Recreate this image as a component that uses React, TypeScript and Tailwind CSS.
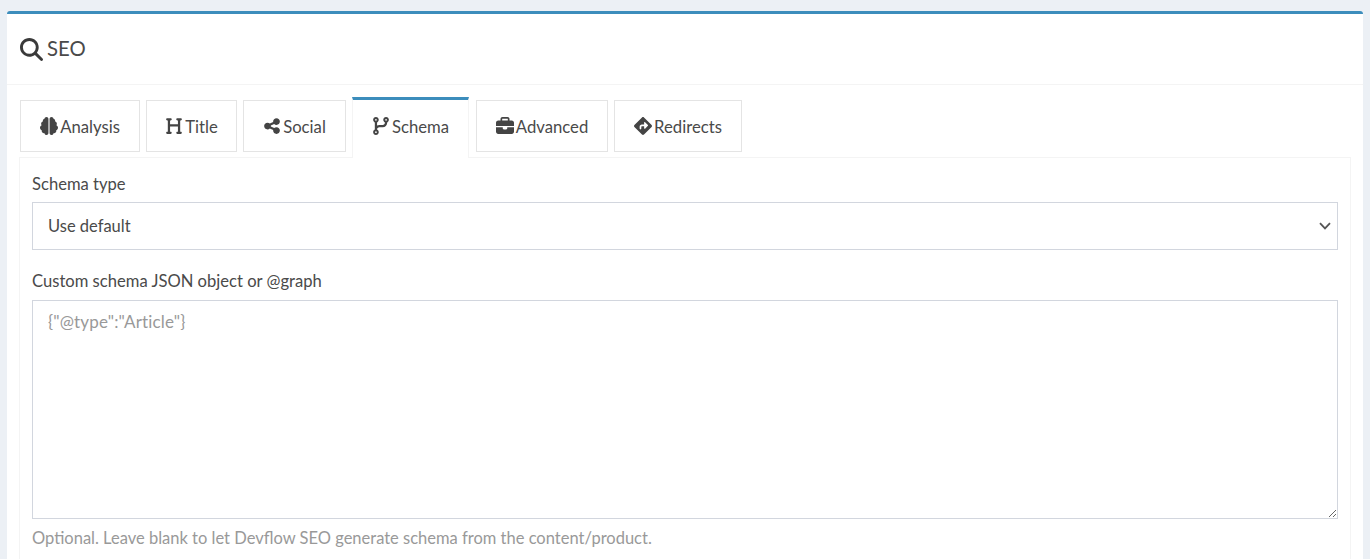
import { FaMagnifyingGlass, FaBrain, FaHeading, FaShareNodes, FaCodeBranch, FaBriefcase, FaDiamondTurnRight } from "react-icons/fa6";

const tabs = [
  { label: "Analysis", icon: FaBrain, width: "w-[120px]" },
  { label: "Title", icon: FaHeading, width: "w-[91px]" },
  { label: "Social", icon: FaShareNodes, width: "w-[103px]" },
  { label: "Schema", icon: FaCodeBranch, width: "w-[117px]", active: true },
  { label: "Advanced", icon: FaBriefcase, width: "w-[132px]" },
  { label: "Redirects", icon: FaDiamondTurnRight, width: "w-[128px]" },
];

export default function App() {
  return (
    <div className="h-[559px] overflow-hidden bg-[#ecf0f5] pt-[11px] px-[7px] font-['Lato','Noto_Sans',sans-serif] text-[#4a4a4a]">
      <div className="h-[600px] bg-white border-t-[3px] border-[#3c8dbc] rounded-t-[3px]">
        <div className="h-[71px] flex items-center gap-[4px] px-[13px] border-b border-[#f4f4f4]">
          <FaMagnifyingGlass className="text-[23px] text-[#3a3a3a]" />
          <h3 className="text-[20.3px] -mt-[2px]">SEO</h3>
        </div>
        <div className="pt-[15px] px-[12px]">
          <div className="flex gap-[6px] h-[61px] items-start pl-px">
            {tabs.map((t) => {
              const Icon = t.icon;
              return (
                <div
                  key={t.label}
                  className={
                    t.active
                      ? `${t.width} relative z-10 h-[61px] -mt-[3px] mr-px border-t-[3px] border-x border-t-[#3c8dbc] border-x-[#f4f4f4] bg-white flex items-center justify-center gap-[2px] pb-[7px] text-[16.7px]`
                      : `${t.width} h-[52px] border border-[#e4e4e4] flex items-center justify-center gap-[2px] text-[16.7px]`
                  }
                >
                  <Icon className="text-[18px] text-[#444] shrink-0" />
                  <span className="pt-[4px]">{t.label}</span>
                </div>
              );
            })}
          </div>
          <div className="-mt-[4px] h-[420px] w-[1332px] border border-[#f4f4f4] px-[12px] pt-[16px] text-[16.6px]">
            <label className="block leading-[20px] mb-[8px]">Schema type</label>
            <div className="relative">
              <select className="block w-full h-[48px] appearance-none border border-[#d2d6de] bg-white px-[15px] text-[#4a4a4a] text-[16.5px] outline-none">
                <option>Use default</option>
              </select>
              <svg className="absolute right-[7px] top-[20px] w-[12px] h-[8px] text-[#555]" viewBox="0 0 12 8" fill="none">
                <path d="M1 1.2 6 6.4 11 1.2" stroke="currentColor" strokeWidth="1.8" />
              </svg>
            </div>
            <label className="block leading-[20px] mt-[21px] mb-[9px]">Custom schema JSON object or @graph</label>
            <textarea
              className="block w-full h-[219px] border border-[#d2d6de] px-[15px] py-[10px] text-[17px] tracking-[0.15px] leading-[22px] placeholder:text-[#999] outline-none"
              placeholder={'{"@type":"Article"}'}
            />
            <p className="mt-[9px] leading-[20px] text-[16.5px] text-[#999]">
              Optional. Leave blank to let Devflow SEO generate schema from the content/product.
            </p>
          </div>
        </div>
      </div>
    </div>
  );
}
